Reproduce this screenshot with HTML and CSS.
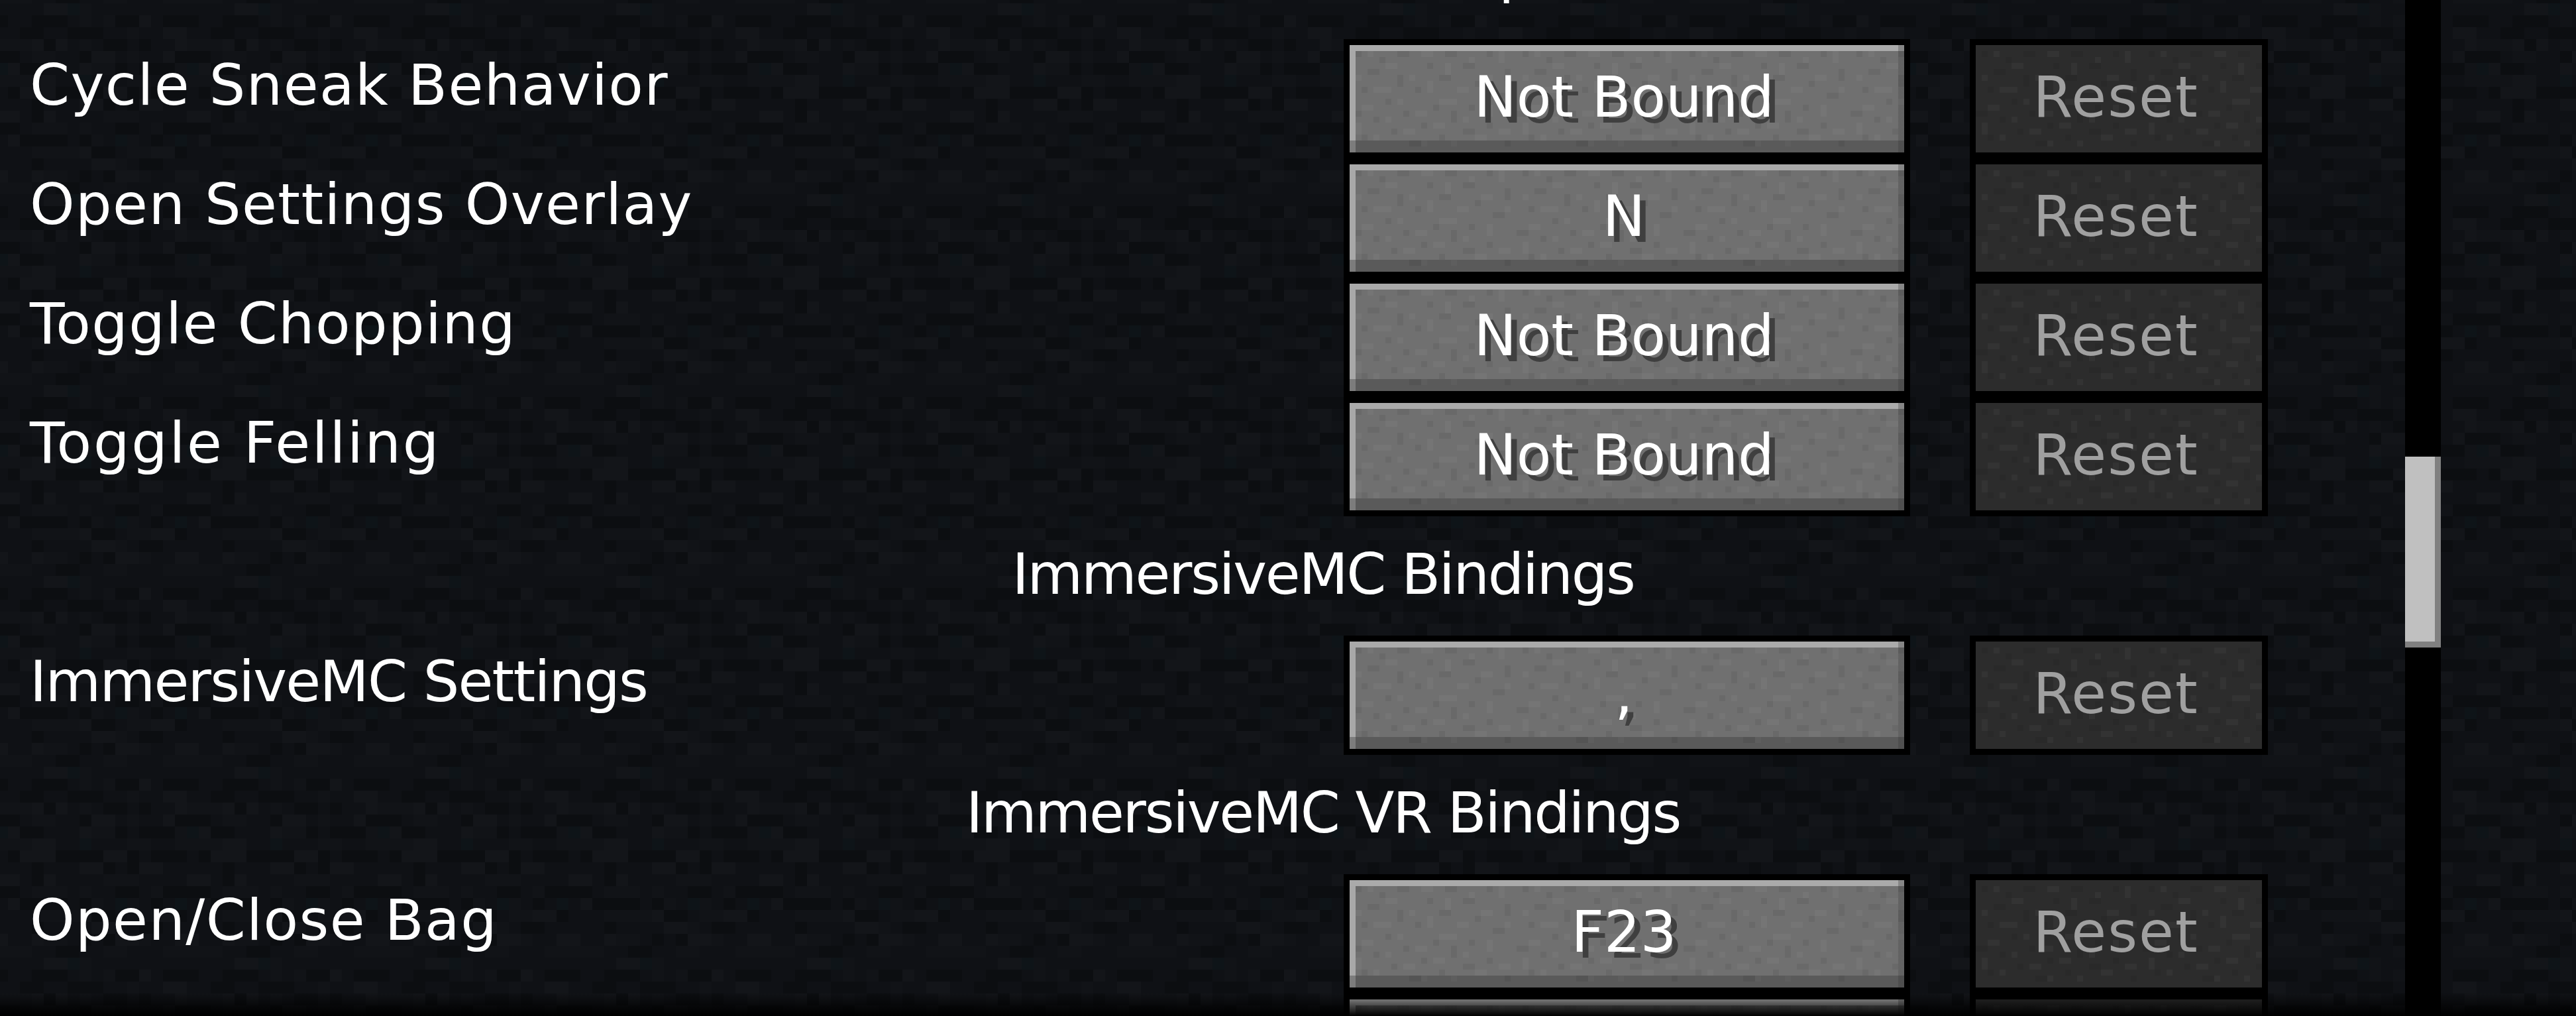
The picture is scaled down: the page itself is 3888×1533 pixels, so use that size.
FILE: index.html
```html
<!DOCTYPE html>
<html lang="en">
<head>
    <meta charset="UTF-8">
    <title>Key Binds</title>
    <link rel="stylesheet" href="styles.css">
</head>
<body>
    <div class="screen">
        <div class="list">
            <div class="category category-top">HT's TreeChop</div>

            <div class="key-row">
                <div class="key-label">Cycle Sneak Behavior</div>
                <button class="key-btn">Not Bound</button>
                <button class="reset-btn" disabled>Reset</button>
            </div>
            <div class="key-row">
                <div class="key-label">Open Settings Overlay</div>
                <button class="key-btn">N</button>
                <button class="reset-btn" disabled>Reset</button>
            </div>
            <div class="key-row">
                <div class="key-label">Toggle Chopping</div>
                <button class="key-btn">Not Bound</button>
                <button class="reset-btn" disabled>Reset</button>
            </div>
            <div class="key-row">
                <div class="key-label key-label-wide">Toggle Felling</div>
                <button class="key-btn">Not Bound</button>
                <button class="reset-btn" disabled>Reset</button>
            </div>

            <div class="category">ImmersiveMC Bindings</div>

            <div class="key-row">
                <div class="key-label key-label-tight">ImmersiveMC Settings</div>
                <button class="key-btn">,</button>
                <button class="reset-btn" disabled>Reset</button>
            </div>

            <div class="category">ImmersiveMC VR Bindings</div>

            <div class="key-row">
                <div class="key-label">Open/Close Bag</div>
                <button class="key-btn">F23</button>
                <button class="reset-btn" disabled>Reset</button>
            </div>
            <div class="key-row">
                <div class="key-label"></div>
                <button class="key-btn"></button>
                <button class="reset-btn" disabled></button>
            </div>
        </div>

        <div class="scroll-track">
            <div class="scroll-thumb"></div>
        </div>

        <div class="list-fade"></div>
    </div>
</body>
</html>
```

FILE: styles.css
```css
:root {
    --noise: url("data:image/svg+xml,<svg xmlns='http://www.w3.org/2000/svg' width='252' height='162' viewBox='0 0 28 18' shape-rendering='crispEdges'><path fill='%23fff' fill-opacity='.035' d='M3 1h1v1h-1zM12 1h2v1h-2zM20 2h1v1h-1zM25 1h1v2h-1zM6 3h2v1h-2zM16 3h1v2h-1zM1 5h1v1h-1zM10 5h1v1h-1zM22 5h2v1h-2zM4 7h3v1h-3zM13 6h1v2h-1zM18 7h2v1h-2zM26 7h1v1h-1zM8 9h1v1h-1zM2 10h2v1h-2zM15 9h3v1h-3zM23 10h1v2h-1zM11 11h2v1h-2zM6 12h1v1h-1zM19 12h1v1h-1zM1 13h1v2h-1zM14 13h2v1h-2zM25 14h2v1h-2zM9 14h2v1h-2zM4 15h1v1h-1zM21 15h2v1h-2zM17 16h1v1h-1zM12 16h1v1h-1z'/><path fill='%23000' fill-opacity='.06' d='M1 1h1v1h-1zM8 1h2v1h-2zM16 1h2v1h-2zM23 1h1v1h-1zM5 2h1v1h-1zM13 3h1v1h-1zM19 3h2v1h-2zM3 4h2v1h-2zM26 4h1v2h-1zM8 5h1v2h-1zM15 5h2v1h-2zM21 6h1v1h-1zM2 7h1v1h-1zM11 7h1v1h-1zM24 8h2v1h-2zM6 9h1v1h-1zM14 10h1v1h-1zM20 10h1v1h-1zM0 11h2v1h-2zM9 11h1v1h-1zM17 11h1v2h-1zM4 12h1v1h-1zM12 13h1v1h-1zM23 13h1v1h-1zM7 14h1v1h-1zM19 14h2v1h-2zM2 15h1v1h-1zM15 15h1v1h-1zM10 16h2v1h-2zM26 16h1v1h-1z'/></svg>");
}

* {
    margin: 0;
    padding: 0;
    box-sizing: border-box;
}

html,
body {
    height: 100%;
    overflow: hidden;
}

body {
    font-family: "DejaVu Sans", sans-serif;
    font-size: 86px;
    color: #ffffff;
    background-color: #0f1115;
    background-image: url("data:image/svg+xml,<svg xmlns='http://www.w3.org/2000/svg' width='288' height='288' viewBox='0 0 16 16' shape-rendering='crispEdges'><path fill='%23131519' d='M1 0h2v1h-2zM9 1h1v1h-1zM11 2h2v1h-2zM0 3h1v1h-1zM2 3h1v1h-1zM12 3h1v1h-1zM5 4h2v1h-2zM11 4h1v1h-1zM4 5h1v1h-1zM14 5h1v1h-1zM0 6h2v2h-2zM6 7h2v1h-2zM15 7h1v1h-1zM4 8h2v1h-2zM9 8h2v1h-2zM1 9h1v1h-1zM13 9h2v1h-2zM14 11h1v1h-1zM4 12h1v1h-1zM10 12h2v1h-2zM5 13h2v1h-2zM0 14h1v1h-1zM7 14h2v1h-2zM12 14h2v1h-2z'/><path fill='%23111317' d='M4 0h1v2h-1zM6 1h1v1h-1zM8 2h1v1h-1zM4 3h1v1h-1zM13 3h3v1h-3zM0 4h2v1h-2zM8 4h1v1h-1zM5 5h2v1h-2zM12 5h1v1h-1zM8 6h2v1h-2zM12 6h4v1h-4zM6 9h3v1h-3zM0 10h3v1h-3zM4 10h1v1h-1zM10 10h1v1h-1zM5 11h1v1h-1zM8 11h1v1h-1zM0 12h4v1h-4zM8 12h2v1h-2zM7 13h1v1h-1zM1 14h2v1h-2zM9 14h1v1h-1zM6 15h2v1h-2zM11 15h5v1h-5z'/><path fill='%230c0e11' d='M0 1h3v1h-3zM7 1h2v1h-2zM11 1h3v1h-3zM0 2h1v1h-1zM3 2h3v1h-3zM15 2h1v1h-1zM1 3h1v1h-1zM6 3h2v1h-2zM9 3h1v1h-1zM4 4h1v1h-1zM12 4h3v1h-3zM0 5h1v1h-1zM7 5h1v1h-1zM9 5h3v1h-3zM15 5h1v1h-1zM2 7h4v1h-4zM8 7h1v1h-1zM10 7h3v1h-3zM14 7h1v1h-1zM0 8h1v2h-1zM6 8h1v1h-1zM8 8h1v1h-1zM7 10h2v1h-2zM11 10h4v1h-4zM0 11h3v1h-3zM4 11h1v1h-1zM10 11h1v1h-1zM15 11h1v1h-1zM5 12h2v1h-2zM12 12h1v1h-1zM0 13h1v1h-1zM9 13h2v1h-2zM4 14h1v1h-1zM6 14h1v1h-1zM2 15h2v1h-2z'/><path fill='%230e1418' d='M3 0h1v1h-1zM13 5h1v1h-1zM4 6h1v1h-1zM7 11h1v1h-1zM12 11h1v1h-1z'/></svg>");
    background-position: 48px 5px;
}

.screen {
    position: relative;
    display: flex;
    height: 1533px;
    overflow: hidden;
}

.list {
    flex: 0 0 3630px;
    min-width: 0;
    margin-top: -121px;
}

.category {
    height: 180px;
    margin-right: -364px;
    line-height: 174px;
    letter-spacing: -2.3px;
    text-align: center;
}

.category-top {
    line-height: 156px;
    letter-spacing: 2.3px;
}

.key-row {
    display: flex;
    height: 180px;
}

.key-label {
    flex: 0 0 2028px;
    padding-left: 45px;
    line-height: 138px;
    letter-spacing: 1.4px;
    white-space: nowrap;
}

.key-label-wide {
    letter-spacing: 2.7px;
}

.key-label-tight {
    letter-spacing: -1.8px;
}

.key-btn,
.reset-btn {
    height: 180px;
    border: 9px solid #000000;
    font: inherit;
    line-height: 156px;
    padding: 0 9px 6px 0;
}

.key-btn {
    flex: 0 0 855px;
    margin-right: 90px;
    color: #ffffff;
    text-shadow: 9px 9px 0 #3f3f3f;
    background:
        linear-gradient(#868686, #868686) top right / 9px 9px no-repeat,
        linear-gradient(#7c7c7c, #7c7c7c) bottom left / 9px 18px no-repeat,
        linear-gradient(#aaaaaa, #aaaaaa) top / 100% 9px no-repeat,
        linear-gradient(#a8a8a8, #a8a8a8) left / 9px 100% no-repeat,
        linear-gradient(rgba(0, 0, 0, 0.2), rgba(0, 0, 0, 0.2)) bottom / 100% 18px no-repeat,
        linear-gradient(rgba(0, 0, 0, 0.12), rgba(0, 0, 0, 0.12)) right / 9px 100% no-repeat,
        var(--noise) 0 0,
        #707070;
    background-origin: padding-box;
    background-clip: padding-box;
}

.reset-btn {
    flex: 0 0 450px;
    color: #a0a0a0;
    letter-spacing: 2px;
    background: var(--noise) 0 0, #2c2c2c;
    background-clip: padding-box;
}

.scroll-track {
    flex: 0 0 54px;
    background: #000000;
}

.scroll-thumb {
    margin-top: 689px;
    height: 288px;
    background: #c0c0c0;
    box-shadow: inset -9px -9px 0 #808080;
}

.list-fade {
    position: absolute;
    left: 0;
    right: 0;
    bottom: 0;
    height: 36px;
    background: linear-gradient(rgba(0, 0, 0, 0), #000000);
}
```
